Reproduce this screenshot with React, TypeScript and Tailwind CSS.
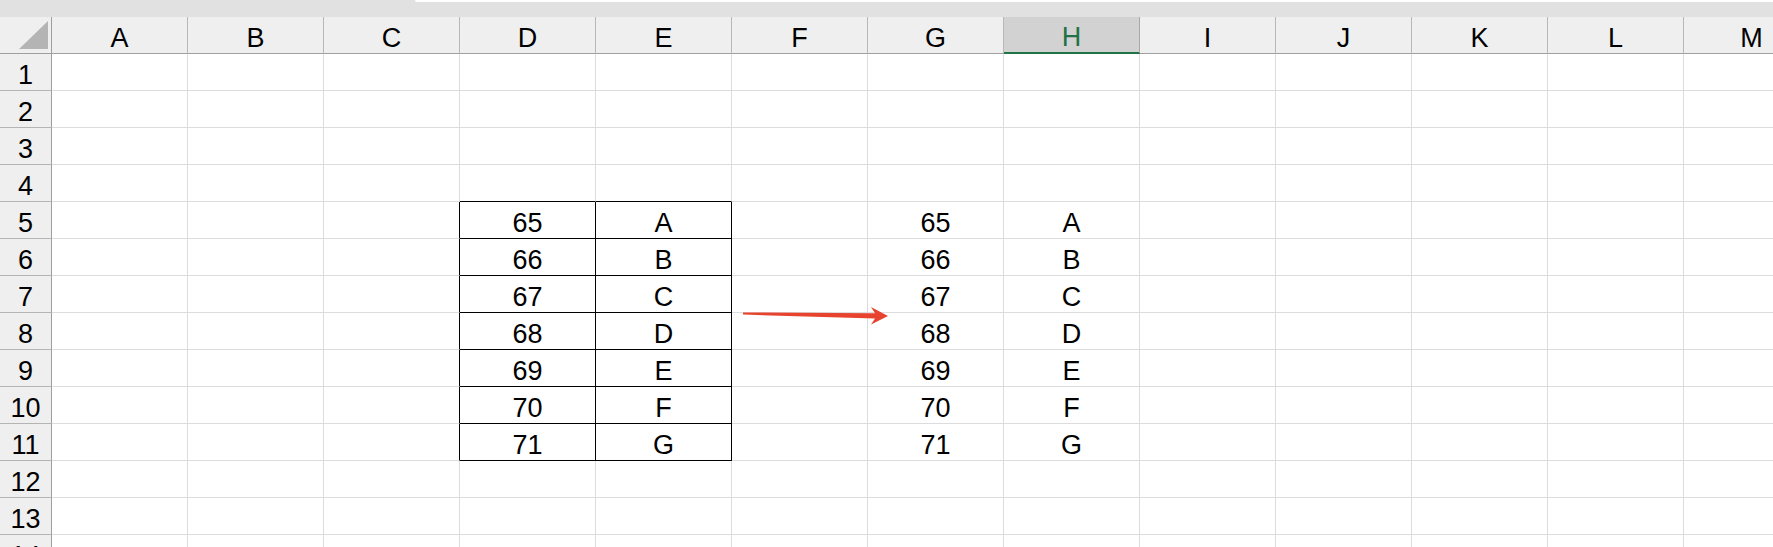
import React from "react";

const COLS = ["A", "B", "C", "D", "E", "F", "G", "H", "I", "J", "K", "L", "M"];
const ROWS = Array.from({ length: 14 }, (_, i) => i + 1);

// values for rows 5..11
function cellValue(col: string, row: number): string {
  if (row < 5 || row > 11) return "";
  const n = 65 + (row - 5);
  if (col === "D" || col === "G") return String(n);
  if (col === "E" || col === "H") return String.fromCharCode(n);
  return "";
}

function borderClass(col: string, row: number): string {
  const inTable = (col === "D" || col === "E") && row >= 5 && row <= 11;
  if (inTable) return "border-r-black border-b-black";
  // left edge of the boxed table
  if (col === "C" && row >= 5 && row <= 11) return "border-r-black border-b-[#dcdcdc]";
  // top edge of the boxed table
  if ((col === "D" || col === "E") && row === 4) return "border-r-[#dcdcdc] border-b-black";
  return "border-r-[#dcdcdc] border-b-[#dcdcdc]";
}

export default function App() {
  return (
    <div
      className="relative w-[1773px] h-[547px] overflow-hidden bg-white text-[27px] text-black"
      style={{ fontFamily: '"Liberation Sans", Arial, sans-serif' }}
    >
      {/* window strip */}
      <div className="h-[17px] bg-[#e1e1e1] flex">
        <div className="ml-[415px] flex-1 h-[2px] bg-white rounded-bl-[3px]" />
      </div>

      {/* column headers */}
      <div className="flex">
        <div className="relative w-[52px] h-[37px] shrink-0 bg-[#efefef] border-r border-b border-r-[#9f9f9f] border-b-[#9f9f9f]">
          <svg className="absolute left-[19px] top-[4px]" width="30" height="29" viewBox="0 0 30 29">
            <polygon points="29,0 29,28 0,28" fill="#b4b4b4" />
          </svg>
        </div>
        {COLS.map((c) =>
          c === "H" ? (
            <div
              key={c}
              className="w-[136px] h-[37px] shrink-0 flex items-end justify-center leading-[28px] pb-[1px] bg-[#d2d2d2] text-[#217346] border-r border-r-[#a8a8a8] border-b-2 border-b-[#217346]"
            >
              {c}
            </div>
          ) : (
            <div
              key={c}
              className="w-[136px] h-[37px] shrink-0 flex items-end justify-center leading-[28px] pb-[1px] bg-[#efefef] border-r border-b border-r-[#b8b8b8] border-b-[#9f9f9f]"
            >
              {c}
            </div>
          )
        )}
      </div>

      {/* rows */}
      {ROWS.map((r) => (
        <div key={r} className="flex">
          <div className="w-[52px] h-[37px] shrink-0 flex items-end justify-center leading-[28px] pb-[1px] bg-[#efefef] border-r border-b border-r-[#9f9f9f] border-b-[#b4b4b4]">
            {r}
          </div>
          {COLS.map((c) => (
            <div
              key={c}
              className={`w-[136px] h-[37px] shrink-0 flex items-end justify-center leading-[28px] pb-[1px] border-r border-b ${borderClass(c, r)}`}
            >
              {cellValue(c, r)}
            </div>
          ))}
        </div>
      ))}

      {/* red arrow shape */}
      <svg className="absolute left-0 top-0 pointer-events-none" width="1773" height="547">
        <polygon
          points="743,312.4 875,313.2 871,307 888,316 871,324.5 875,318.6 743,314.6"
          fill="#e8432f"
        />
      </svg>
    </div>
  );
}
